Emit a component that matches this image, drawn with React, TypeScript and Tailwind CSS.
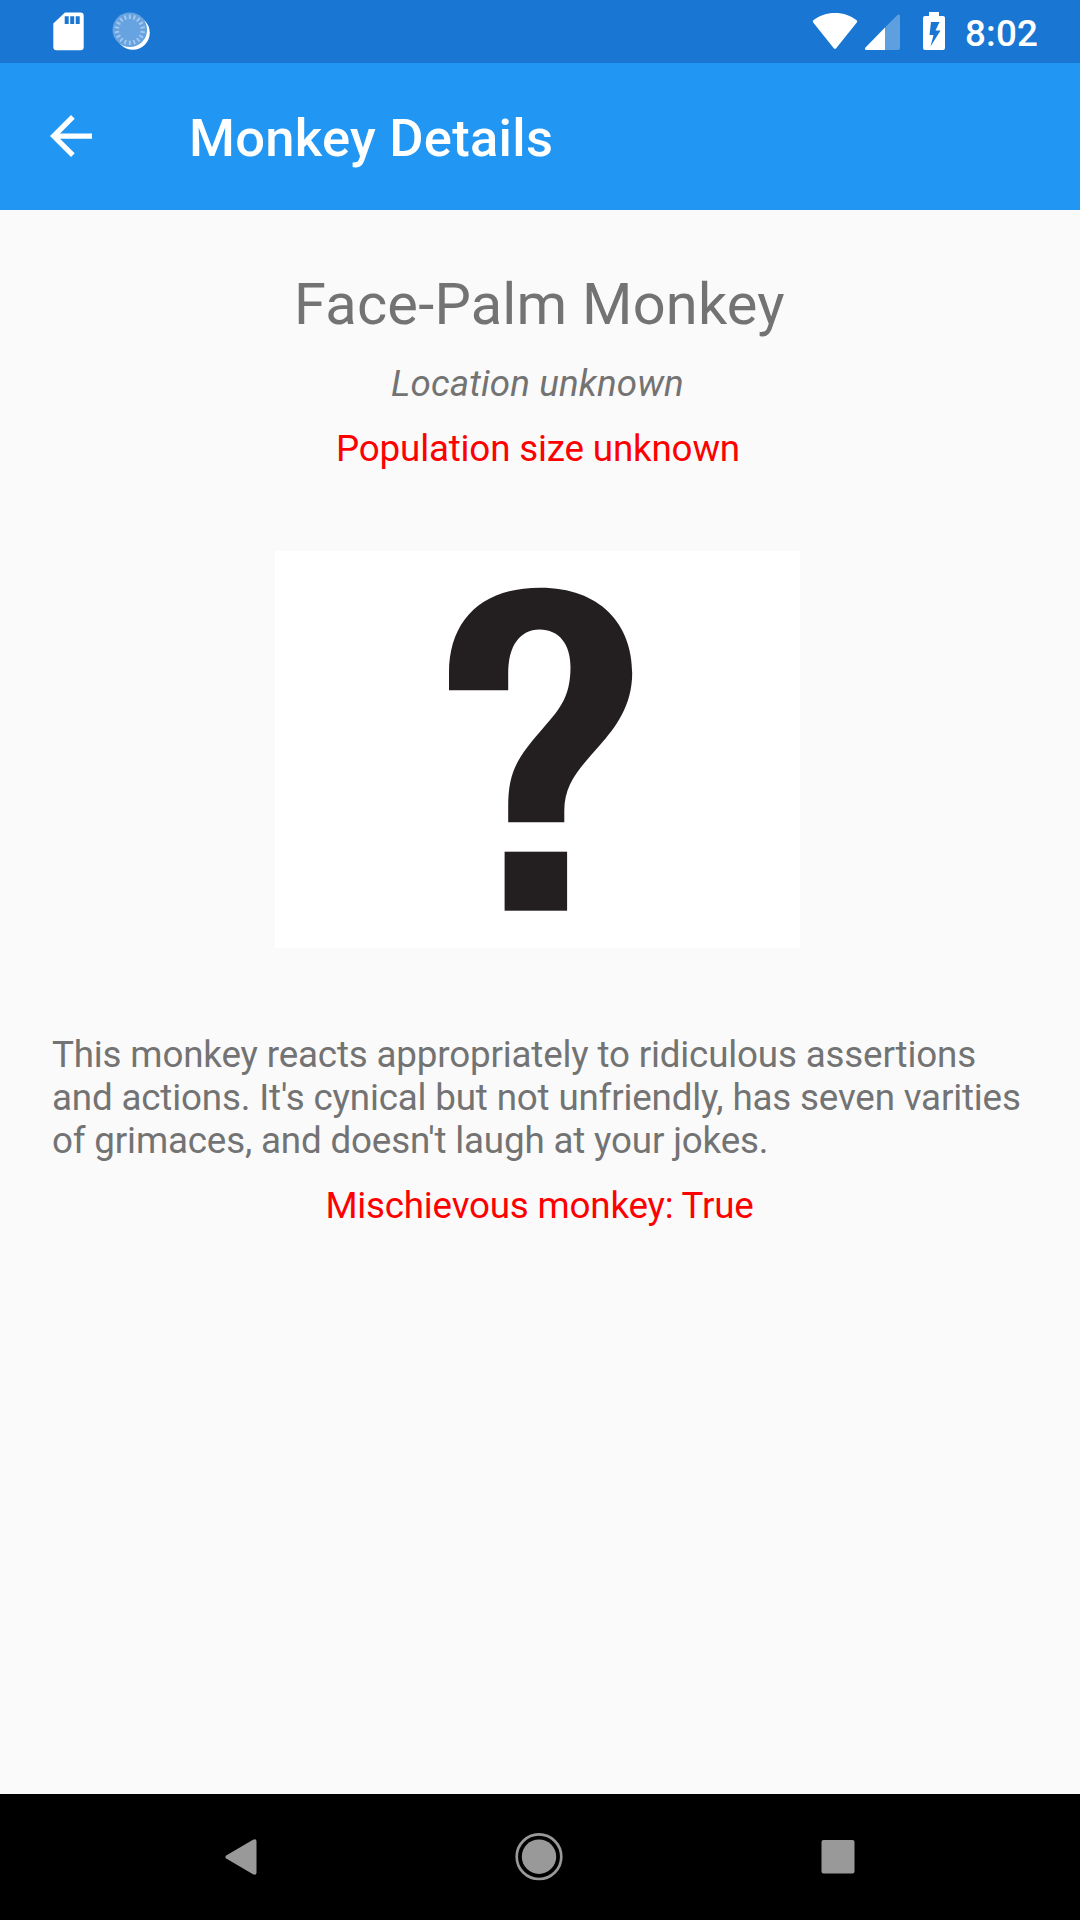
const TICKS = Array.from({ length: 18 }, (_, i) => i * 20);

function StatusBar() {
  return (
    <header className="flex h-[63px] items-start bg-[#1976d2] text-white">
      <svg className="ml-[53px] mt-3 h-[39px] w-[31px]" viewBox="0 0 31 39" fill="currentColor">
        <path
          fillRule="evenodd"
          d="M12 .5H27.500Q30.700 .5 30.700 3.700V35.100Q30.700 38.300 27.500 38.300H3.500Q.3 38.300 .3 35.100V11.500ZM11.700 4.300v7.700h4V4.300Zm5.500 0v7.700h4V4.300Zm5.500 0v7.700h4V4.300Z"
        />
      </svg>
      <svg className="ml-[28px] mt-3 h-[39px] w-[39px]" viewBox="0 0 39 39">
        <circle cx="20.800" cy="20.800" r="17" fill="#fff" />
        <circle cx="17.800" cy="17.800" r="17.300" fill="#66a3e0" />
        {TICKS.map((a) => (
          <path key={a} d="M17.800 2.500V7" stroke="#a6c9ed" strokeWidth="1.800" transform={`rotate(${a} 17.800 17.800)`} />
        ))}
      </svg>
      <svg className="ml-auto mt-3 h-[38px] w-[46px]" viewBox="0 0 46 38" fill="currentColor">
        <path d="M1.200 10.500Q.1 9.300 1.300 8.300C7 3.700 14.500 1 23 1S39 3.700 44.700 8.300Q45.900 9.300 44.800 10.500L24.200 36.200Q23 37.600 21.800 36.200Z" />
      </svg>
      <svg className="ml-[6px] mt-3 h-[38px] w-[37px]" viewBox="0 0 37 38" fill="currentColor">
        <path d="M21 15.500 33 3.500Q36 1.300 36 4.500V36Q36 38 34 38H21Z" opacity=".3" />
        <path d="M21 15.500V38H2.500Q0 38 1.500 35.500Z" />
      </svg>
      <svg className="ml-[22px] mt-3 h-[38px] w-[22px]" viewBox="0 0 22 38" fill="currentColor">
        <path
          fillRule="evenodd"
          d="M6 0H16V4H20Q22 4 22 6V36Q22 38 20 38H2Q0 38 0 36V6Q0 4 2 4H6ZM8 10 6.500 23H10.500L7.500 34.500 17.500 18.500H12.500L16.500 10Z"
        />
      </svg>
      <span className="ml-[20px] mt-[12px] w-[115px] text-[36.75px] font-medium leading-[43px] tracking-[0.15px]">8:02</span>
    </header>
  );
}

function AppBar() {
  return (
    <div className="flex h-[147px] items-center bg-[#2196f3] text-white">
      <button aria-label="Back" className="ml-[50px]">
        <svg className="mb-px h-[42px] w-[42px]" viewBox="4 4 16 16" fill="currentColor">
          <path d="M20 11H7.830l5.590-5.590L12 4l-8 8 8 8 1.410-1.410L7.830 13H20v-2z" />
        </svg>
      </button>
      <h1 className="ml-[97px] mt-[2px] text-[52.5px] font-medium leading-[62px] tracking-[0.28px]">Monkey Details</h1>
    </div>
  );
}

function UnknownPicture() {
  return (
    <svg className="mr-[5px] mt-[81px] h-[397px] w-[525px] bg-white" viewBox="0 0 525 397" fill="#231f20" role="img" aria-label="Unknown monkey">
      <path d="M174 139.200V122C174 69 207 36.700 265.400 36.700C325 36.700 357.200 73 357.200 122C357.200 155 340 177 325 194C305 217 289.300 232 289.300 260V271.300H233.200V255C233.200 222 242 207 265 180.700C283 160 295.500 148 295.500 116C295.500 93 284 78.500 264.500 78.500C245 78.500 233.200 95 233.200 122V139.200Z" />
      <rect x="229.600" y="300.700" width="62.500" height="59" />
    </svg>
  );
}

function NavigationBar() {
  return (
    <nav className="flex h-[126px] items-center justify-between bg-black px-[225px] text-[#999]">
      <svg className="h-9 w-8" viewBox="0 0 32 36" fill="currentColor">
        <path d="M1.200 19.500Q-.5 18 1.200 16.500L28 .7Q31.500-.8 31.500 2.500V33.500Q31.500 36.800 28 35.300Z" />
      </svg>
      <svg className="mb-px h-12 w-12" viewBox="0 0 48 48">
        <circle cx="24" cy="23.700" r="22.300" fill="none" stroke="currentColor" strokeWidth="2.700" />
        <circle cx="24" cy="23.700" r="17.200" fill="currentColor" />
      </svg>
      <svg className="h-[34px] w-[34px]" viewBox="0 0 34 34" fill="currentColor">
        <rect x=".5" width="33" height="33.500" rx="2" />
      </svg>
    </nav>
  );
}

export default function App() {
  return (
    <div className="flex h-[1920px] w-[1080px] flex-col bg-[#fafafa] font-['Roboto',sans-serif] text-[36.75px] leading-[43px] text-[#737373]">
      <StatusBar />
      <AppBar />
      <main className="flex flex-1 flex-col items-center px-[52px] pt-[60px]">
        <h2 className="mr-px text-[57.75px] leading-[68px] tracking-[0.22px]">Face-Palm Monkey</h2>
        <p className="mr-[5px] mt-[24px] italic tracking-[0.12px]">Location unknown</p>
        <p className="mr-[4px] mt-[22px] tracking-[-0.17px] text-[#ff0000]">Population size unknown</p>
        <UnknownPicture />
        <p className="mt-[85px] w-full tracking-[-0.165px]">
          This monkey reacts appropriately to ridiculous assertions and actions. It's cynical but not unfriendly, has seven varities of grimaces, and doesn't laugh at your jokes.
        </p>
        <p className="mr-px mt-[22px] tracking-[-0.2px] text-[#ff0000]">Mischievous monkey: True</p>
      </main>
      <NavigationBar />
    </div>
  );
}
